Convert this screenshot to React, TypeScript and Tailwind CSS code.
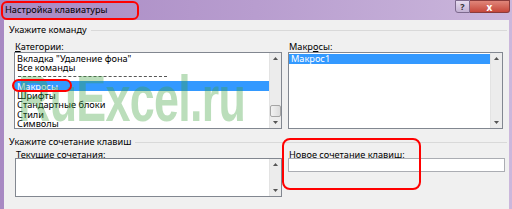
import React from "react";

const font = { fontFamily: '"Noto Sans", "Open Sans", sans-serif' };

function UpArrow() {
  return (
    <svg width="5" height="3" viewBox="0 0 5 3">
      <path d="M0 3 L2.5 0 L5 3 Z" fill="#555" />
    </svg>
  );
}
function DownArrow() {
  return (
    <svg width="5" height="3" viewBox="0 0 5 3">
      <path d="M0 0 L2.5 3 L5 0 Z" fill="#555" />
    </svg>
  );
}

function ScrollBar({ thumb }: { thumb?: boolean }) {
  return (
    <div className="w-[12px] shrink-0 bg-[#ececec] border-l border-[#e3e3e3] flex flex-col items-center justify-between py-[4px]">
      <UpArrow />
      <div className="flex flex-col items-center gap-[4px]">
        {thumb && (
          <div className="w-[11px] h-[12px] rounded-[2px] border border-[#a5a5a5] bg-gradient-to-r from-[#f2f2f2] to-[#dcdcdc]" />
        )}
        <DownArrow />
      </div>
    </div>
  );
}

export default function App() {
  const items = [
    "Вкладка \"Удаление фона\"",
    "Все команды",
    "__sep__",
    "Макросы",
    "Шрифты",
    "Стандартные блоки",
    "Стили",
    "Символы",
  ];
  return (
    <div
      className="relative w-[512px] h-[209px] overflow-hidden flex flex-col bg-gradient-to-r from-[#a889c3] via-[#b89dcf] to-[#cbb7dc] text-black"
      style={font}
    >
      {/* Title bar */}
      <div className="h-[20px] shrink-0 flex items-start justify-between">
        <div className="pl-[5px] pt-[4px] text-[9.2px] leading-[12px]">Настройка клавиатуры</div>
        <div className="flex mr-[2px]">
          <div className="w-[15px] h-[13px] border border-[#7d6a8e] rounded-bl-[3px] bg-gradient-to-b from-[#e6dcef] to-[#c3b1d3] flex items-center justify-center text-[9px] font-bold leading-none text-[#333]">
            ?
          </div>
          <div className="w-[40px] h-[13px] border border-[#8a3b3b] border-l-0 rounded-br-[3px] bg-gradient-to-b from-[#e0867a] to-[#c6463a] flex items-center justify-center text-[10px] font-bold leading-none text-white">
            x
          </div>
        </div>
      </div>

      {/* Body */}
      <div className="flex-1 ml-[4px] mr-[3px] bg-[#f0f0f0] flex flex-col text-[9.2px] leading-[10px]">
        {/* group 1 header */}
        <div className="flex items-center mt-[5px] pl-[5px] pr-[2px] gap-[4px] h-[10px]">
          <span>Укажите команду</span>
          <div className="flex-1 border-t border-[#d9d9d9]" />
        </div>
        <div className="flex mt-[7px] pl-[10px] gap-[6px]">
          {/* Left column */}
          <div className="w-[268px] flex flex-col">
            <div className="pl-[1px] h-[10px]">
              <span className="underline">К</span>атегории:
            </div>
            <div className="h-[77px] border border-[#828790] bg-white flex">
              <div className="flex-1 flex flex-col pt-[0.5px] leading-[9px]">
                {items.map((it, i) =>
                  it === "__sep__" ? (
                    <div key={i} className="h-[9.3px] flex items-center pl-[3px]">
                      <div className="w-[149px] border-t border-dashed border-[#555]" />
                    </div>
                  ) : it === "Макросы" ? (
                    <div key={i} className="h-[9.6px] flex items-center pl-[2px] bg-[#3399ff] text-white">
                      {it}
                    </div>
                  ) : (
                    <div key={i} className="h-[9.3px] flex items-center pl-[2px]">
                      {it}
                    </div>
                  )
                )}
              </div>
              <ScrollBar thumb />
            </div>
          </div>
          {/* Right column */}
          <div className="w-[215px] flex flex-col">
            <div className="pl-[1px] h-[10px]">
              Макр<span className="underline">о</span>сы:
            </div>
            <div className="h-[77px] border border-[#828790] bg-white flex">
              <div className="flex-1 flex flex-col pt-[0.5px]">
                <div className="h-[10px] flex items-center pl-[2px] bg-[#3399ff] text-white">Макрос1</div>
              </div>
              <ScrollBar />
            </div>
          </div>
        </div>

        {/* group 2 header */}
        <div className="flex items-center mt-[8px] pl-[5px] pr-[2px] gap-[4px] h-[10px]">
          <span>Укажите сочетание клавиш</span>
          <div className="flex-1 border-t border-[#d9d9d9]" />
        </div>
        <div className="flex mt-[3px] pl-[11px] gap-[6px]">
          <div className="w-[267px] flex flex-col">
            <div className="pl-[1px] h-[10px]">
              <span className="underline">Т</span>екущие сочетания:
            </div>
            <div className="mt-[-2px] h-[39px] border border-[#828790] bg-white flex">
              <div className="flex-1" />
              <ScrollBar />
            </div>
          </div>
          <div className="w-[217px] flex flex-col">
            <div className="pl-[1px] h-[10px]">
              Новое сочетание клави<span className="underline">ш</span>:
            </div>
            <div className="mt-[-2px] h-[14px] border border-[#abadb3] bg-white" />
          </div>
        </div>
      </div>

      {/* Watermark */}
      <div
        className="absolute left-[18px] top-[67px] text-[64px] font-bold leading-none text-[rgba(60,160,60,0.35)] origin-left scale-x-[0.7] pointer-events-none tracking-[-1px]"
        style={{ fontFamily: '"Liberation Sans", Arial, sans-serif' }}
      >
        RuExcel.ru
      </div>

      {/* Red annotations */}
      <div className="absolute left-[1px] top-[1px] w-[138px] h-[19px] border-2 border-[#ff0000] rounded-[6px]" />
      <div className="absolute left-[12px] top-[79px] w-[60px] h-[13px] border-2 border-[#ff0000] rounded-[7px]" />
      <div className="absolute left-[282px] top-[138px] w-[139px] h-[52px] border-2 border-[#ff0000] rounded-[8px]" />
    </div>
  );
}
